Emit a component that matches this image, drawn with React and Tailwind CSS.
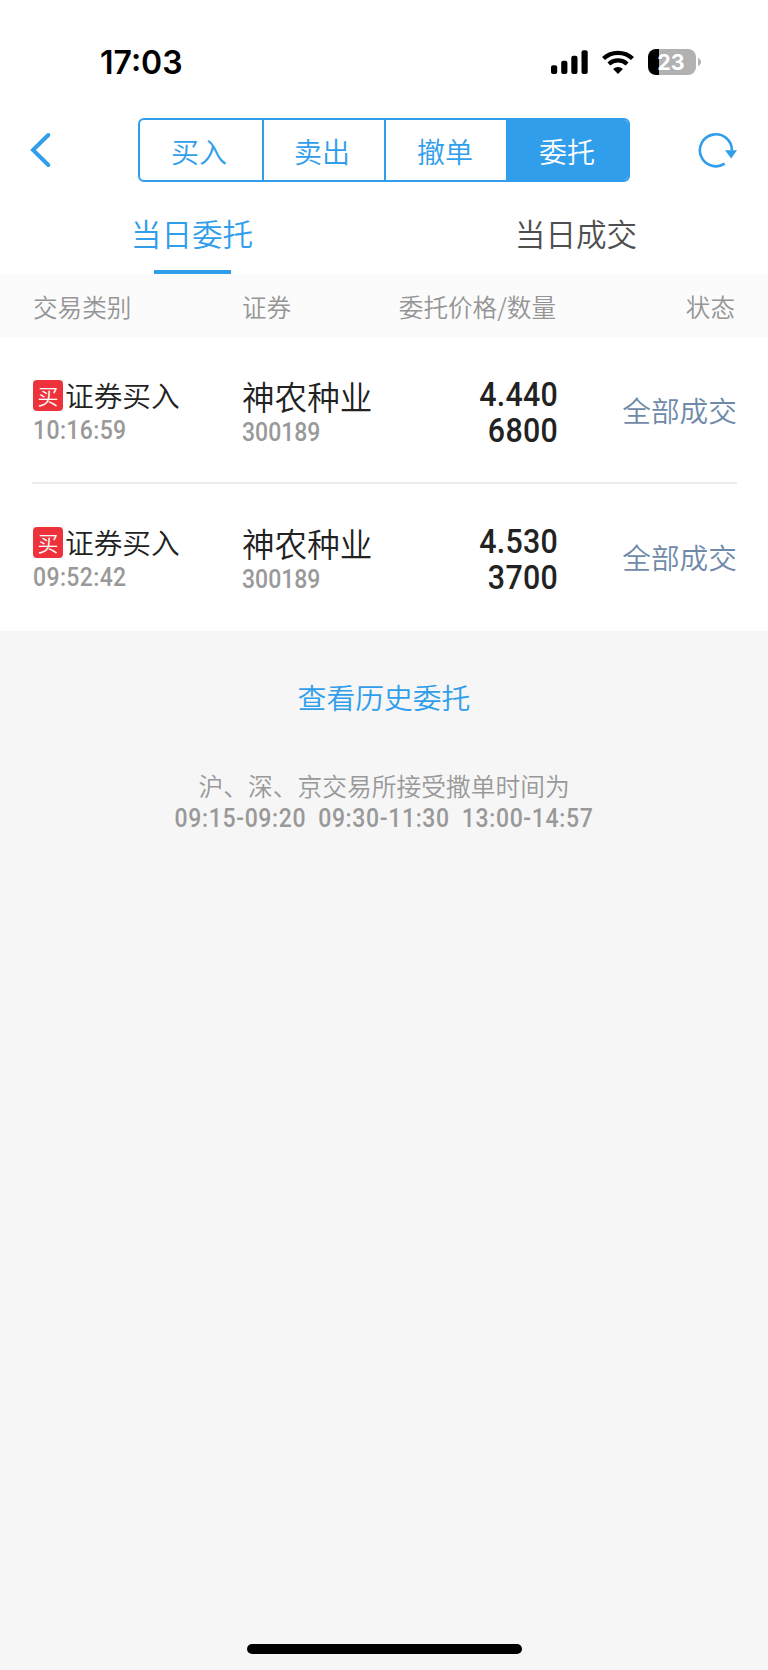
const orders = [
  { time: '10:16:59', price: '4.440', amount: '6800' },
  { time: '09:52:42', price: '4.530', amount: '3700' },
];

function StatusBar() {
  return (
    <div className="flex h-[100px] items-start justify-between pt-[46px] pr-[67px] pl-[100px]">
      <span className="font-['Inter',sans-serif] text-[32px] leading-[34px] font-semibold text-black">17:03</span>
      <div className="flex items-center pt-[3px]">
        <svg width="38" height="26" viewBox="0 0 38 26" fill="#000">
          <rect x="0" y="16.3" width="6.2" height="8.8" rx="2" />
          <rect x="10.2" y="11.8" width="6.2" height="13.3" rx="2" />
          <rect x="20.3" y="6.8" width="6.2" height="18.3" rx="2" />
          <rect x="30.500" y="1.3" width="6.2" height="23.8" rx="2" />
        </svg>
        <svg className="ml-[13px]" width="32" height="26" viewBox="0 0 32 26">
          <g fill="none" stroke="#000" strokeWidth="4.2">
            <path d="M1.5 9.6a21 21 0 0 1 29 0" />
            <path d="M6.9 15.1a13.2 13.2 0 0 1 18.2 0" />
          </g>
          <path d="M16 24.9l-4.9-5a7.2 7.2 0 0 1 9.8 0z" fill="#000" />
        </svg>
        <div className="ml-[14px] flex h-[26px] w-[48px] items-center justify-center rounded-[8px] bg-[linear-gradient(90deg,#000_11px,#b1b1b1_11px)] pr-[2px] font-['Inter',sans-serif] text-[21.500px] leading-[26px] font-bold text-white">
          23
        </div>
        <svg className="ml-[2px]" width="3" height="8" viewBox="0 0 3 8">
          <path d="M0 0c4 1.500 4 6.500 0 8z" fill="#b1b1b1" />
        </svg>
      </div>
    </div>
  );
}

function NavBar() {
  return (
    <div className="flex h-[100px] items-start pt-[18px] pr-[30px] pl-[30px]">
      <svg className="mt-[14px]" width="22" height="36" viewBox="0 0 22 36" fill="none" stroke="#309eea" strokeWidth="4" strokeLinecap="round">
        <path d="M18.300 3L3 18l15.300 15" />
      </svg>
      <div className="ml-[86px] flex h-[64px] w-[492px] overflow-hidden rounded-[6px] border-2 border-[#309eea] text-[28px] leading-[62px] text-[#309eea]">
        <div className="w-[124px] border-r-2 border-[#309eea] pr-[4px] text-center">买入</div>
        <div className="w-[122px] border-r-2 border-[#309eea] pr-[4px] text-center">卖出</div>
        <div className="w-[120px] pr-[2px] text-center">撤单</div>
        <div className="flex-1 bg-[#309eea] text-center text-white">委托</div>
      </div>
      <svg className="mt-[14px] ml-auto" width="40" height="36" viewBox="0 0 40 36">
        <path d="M26.700 31.700A16 16 0 1 1 33.900 18.500" fill="none" stroke="#309eea" strokeWidth="2.600" />
        <path d="M27 18.200h12L33.200 26.500z" fill="#309eea" />
      </svg>
    </div>
  );
}

function OrderRow({ order, last }) {
  return (
    <div className="pr-[31px] pl-[32px]">
      <div className={last ? 'flex h-[147px]' : 'flex h-[147px] border-b-2 border-[#ececec]'}>
        <div className="w-[210px] pt-[43px]">
          <div className="flex h-[31px] items-center">
            <span className="ml-[1px] h-[31px] w-[30px] rounded-[4px] bg-[#ee323b] text-center text-[21px] leading-[30px] text-white">买</span>
            <span className="ml-[2px] pb-[2px] text-[28.700px] leading-[31px] text-[#222]">证券买入</span>
          </div>
          <div className="ml-[1px] mt-[5px] w-[130px] origin-left scale-x-[0.92] font-['Roboto',sans-serif] text-[25px] leading-[30px] font-medium tracking-[0.400px] text-[#999]">{order.time}</div>
        </div>
        <div className="w-[140px] pt-[42px]">
          <div className="text-[32.600px] leading-[34px] whitespace-nowrap text-[#222]">神农种业</div>
          <div className="mt-[5px] w-[100px] origin-left scale-x-[0.92] font-['Roboto',sans-serif] text-[25px] leading-[30px] font-medium text-[#999]">300189</div>
        </div>
        <div className="ml-[76px] w-[100px] origin-right scale-x-[0.92] pt-[40px] text-right font-['Roboto',sans-serif] text-[33px] leading-[35.500px] font-medium tracking-[0.300px] text-[#222]">
          <div>{order.price}</div>
          <div>{order.amount}</div>
        </div>
        <div className="flex-1 pt-[54px] text-right text-[28.700px] leading-[38px] text-[#6f8aa9]">全部成交</div>
      </div>
    </div>
  );
}

export default function App() {
  return (
    <div className="flex h-[1670px] w-[768px] flex-col bg-[#f6f6f6] font-['Noto_Sans_CJK_SC',sans-serif] font-[350]">
      <div className="bg-white">
        <StatusBar />
        <NavBar />
        <div className="flex h-[74px] text-center text-[30.600px] leading-[66px]">
          <div className="flex w-[384px] flex-col items-center justify-between text-[#309eea]">
            <span className="h-[66px]">当日委托</span>
            <span className="h-[4px] w-[77px] bg-[#309eea]" />
          </div>
          <div className="flex-1 text-[#4f4f4f]">当日成交</div>
        </div>
        <div className="flex h-[63px] bg-[#fbfbfb] px-[33px] text-[24.600px] leading-[65px] text-[#959595]">
          <div className="w-[209px]">交易类别</div>
          <div className="w-[140px]">证券</div>
          <div className="w-[174px] text-right whitespace-nowrap">委托价格/数量</div>
          <div className="flex-1 text-right">状态</div>
        </div>
        {orders.map((order, i) => (
          <OrderRow key={order.time} order={order} last={i === orders.length - 1} />
        ))}
      </div>
      <div className="pt-[46px] text-center text-[28.800px] leading-[40px] text-[#309eea]">查看历史委托</div>
      <div className="pt-[50px] text-center text-[24.750px] leading-[36px] text-[#999]">沪、深、京交易所接受撒单时间为</div>
      <div className="flex scale-x-[0.92] justify-center gap-[13px] pt-[2px] font-['Roboto',sans-serif] text-[25px] leading-[28px] font-medium tracking-[0.700px] text-[#999]">
        <span>09:15-09:20</span>
        <span>09:30-11:30</span>
        <span>13:00-14:57</span>
      </div>
      <div className="mx-auto mt-auto mb-[16px] h-[10px] w-[275px] rounded-full bg-black" />
    </div>
  );
}
